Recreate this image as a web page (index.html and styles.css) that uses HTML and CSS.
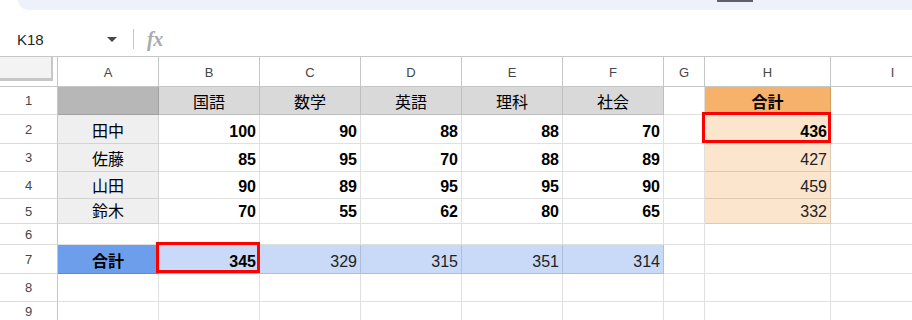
FILE: index.html
```html
<!DOCTYPE html>
<html lang="ja">

<head>
    <meta charset="UTF-8">
    <meta name="viewport" content="width=device-width, initial-scale=1.0">
    <title>成績表 - スプレッドシート</title>
    <link rel="stylesheet" href="styles.css">
</head>

<body>
    <div class="toolbar">
        <span class="toolbar-tab"></span>
    </div>

    <div class="formula-bar">
        <div class="name-box">
            <span class="cell-ref">K18</span>
            <span class="caret"></span>
        </div>
        <span class="divider"></span>
        <span class="fx">fx</span>
    </div>

    <div class="sheet">
        <!-- column headers -->
        <div class="corner"><span class="corner-box"></span></div>
        <div class="ch">A</div>
        <div class="ch">B</div>
        <div class="ch">C</div>
        <div class="ch">D</div>
        <div class="ch">E</div>
        <div class="ch">F</div>
        <div class="ch">G</div>
        <div class="ch">H</div>
        <div class="ch">I</div>

        <!-- row 1 -->
        <div class="rh">1</div>
        <div class="c fill-dark"></div>
        <div class="c ctr fill-gray">国語</div>
        <div class="c ctr fill-gray">数学</div>
        <div class="c ctr fill-gray">英語</div>
        <div class="c ctr fill-gray">理科</div>
        <div class="c ctr fill-gray">社会</div>
        <div class="c"></div>
        <div class="c ctr b fill-orange">合計</div>
        <div class="c"></div>

        <!-- row 2 -->
        <div class="rh">2</div>
        <div class="c ctr fill-light">田中</div>
        <div class="c num b">100</div>
        <div class="c num b">90</div>
        <div class="c num b">88</div>
        <div class="c num b">88</div>
        <div class="c num b">70</div>
        <div class="c"></div>
        <div class="c num b fill-peach hl">436</div>
        <div class="c"></div>

        <!-- row 3 -->
        <div class="rh">3</div>
        <div class="c ctr fill-light">佐藤</div>
        <div class="c num b">85</div>
        <div class="c num b">95</div>
        <div class="c num b">70</div>
        <div class="c num b">88</div>
        <div class="c num b">89</div>
        <div class="c"></div>
        <div class="c num fill-peach">427</div>
        <div class="c"></div>

        <!-- row 4 -->
        <div class="rh">4</div>
        <div class="c ctr fill-light">山田</div>
        <div class="c num b">90</div>
        <div class="c num b">89</div>
        <div class="c num b">95</div>
        <div class="c num b">95</div>
        <div class="c num b">90</div>
        <div class="c"></div>
        <div class="c num fill-peach">459</div>
        <div class="c"></div>

        <!-- row 5 -->
        <div class="rh">5</div>
        <div class="c ctr fill-light">鈴木</div>
        <div class="c num b">70</div>
        <div class="c num b">55</div>
        <div class="c num b">62</div>
        <div class="c num b">80</div>
        <div class="c num b">65</div>
        <div class="c"></div>
        <div class="c num fill-peach">332</div>
        <div class="c"></div>

        <!-- row 6 -->
        <div class="rh">6</div>
        <div class="c"></div>
        <div class="c"></div>
        <div class="c"></div>
        <div class="c"></div>
        <div class="c"></div>
        <div class="c"></div>
        <div class="c"></div>
        <div class="c"></div>
        <div class="c"></div>

        <!-- row 7 -->
        <div class="rh">7</div>
        <div class="c ctr b fill-blue">合計</div>
        <div class="c num b fill-sky hl">345</div>
        <div class="c num fill-sky">329</div>
        <div class="c num fill-sky">315</div>
        <div class="c num fill-sky">351</div>
        <div class="c num fill-sky">314</div>
        <div class="c"></div>
        <div class="c"></div>
        <div class="c"></div>

        <!-- row 8 -->
        <div class="rh">8</div>
        <div class="c"></div>
        <div class="c"></div>
        <div class="c"></div>
        <div class="c"></div>
        <div class="c"></div>
        <div class="c"></div>
        <div class="c"></div>
        <div class="c"></div>
        <div class="c"></div>

        <!-- row 9 -->
        <div class="rh">9</div>
        <div class="c"></div>
        <div class="c"></div>
        <div class="c"></div>
        <div class="c"></div>
        <div class="c"></div>
        <div class="c"></div>
        <div class="c"></div>
        <div class="c"></div>
        <div class="c"></div>
    </div>
</body>

</html>
```

FILE: styles.css
```css
body {
    margin: 0;
    width: 912px;
    height: 320px;
    overflow: hidden;
    background: #fff;
    font-family: 'Liberation Sans', Arial, 'Noto Sans CJK JP', sans-serif;
    color: #000;
}

/* bottom edge of the toolbar pill */
.toolbar {
    height: 10px;
    margin-left: 18px;
    background-color: #edf2fa;
    border-bottom-left-radius: 16px;
    display: flex;
}

.toolbar-tab {
    width: 36px;
    height: 2px;
    margin-left: 699px;
    background-color: #5f6368;
}

.formula-bar {
    height: 47px;
    box-sizing: border-box;
    padding: 19px 0 7px;
    border-bottom: 1px solid #c4c7c5;
    display: flex;
    align-items: center;
}

.name-box {
    width: 118px;
    padding-left: 17px;
    box-sizing: border-box;
    display: flex;
    align-items: center;
    justify-content: space-between;
}

.cell-ref {
    font-size: 15px;
    color: #1f1f1f;
}

.caret {
    width: 0;
    height: 0;
    border-left: 5px solid transparent;
    border-right: 5px solid transparent;
    border-top: 5px solid #444746;
    margin-right: 1px;
}

.divider {
    width: 1px;
    height: 20px;
    margin-left: 15px;
    background-color: #c4c7c5;
}

.fx {
    margin-left: 13px;
    font-family: 'Liberation Serif', serif;
    font-style: italic;
    font-weight: bold;
    font-size: 20px;
    color: #a8abae;
    letter-spacing: -0.5px;
}

.sheet {
    display: grid;
    grid-template-columns: 58px 101px 101px 101px 101px 101px 101px 41px 126px 124px;
    grid-template-rows: 30px 28px 29px 28px 27px 25px 21px 29px 28px 20px;
}

.sheet > div {
    box-sizing: border-box;
}

.corner {
    border-right: 1px solid #c4c7c5;
    border-bottom: 1px solid #c4c7c5;
}

.corner-box {
    display: block;
    width: 53px;
    height: 24px;
    box-sizing: border-box;
    background-color: #f3f3f3;
    border-right: 2px solid #c7c7c7;
    border-bottom: 3px solid #c7c7c7;
}

.ch,
.rh {
    font-size: 13px;
    color: #444746;
    display: flex;
    align-items: center;
    justify-content: center;
    border-right: 1px solid #c4c7c5;
    border-bottom: 1px solid #c4c7c5;
}

.ch {
    padding-top: 1px;
}

.rh {
    border-bottom-color: #d9d9d9;
}

.c {
    font-size: 16px;
    line-height: 18px;
    padding: 0 3px 2px;
    display: flex;
    align-items: flex-end;
    border-right: 1px solid rgba(0, 0, 0, 0.12);
    border-bottom: 1px solid rgba(0, 0, 0, 0.12);
    color: #222;
}

.num {
    justify-content: flex-end;
}

.ctr {
    justify-content: center;
    color: #000;
}

.b {
    font-weight: bold;
    color: #000;
}

.fill-dark {
    background-color: #b7b7b7;
}

.fill-gray {
    background-color: #d9d9d9;
}

.fill-light {
    background-color: #efefef;
}

.fill-orange {
    background-color: #f6b26b;
}

.fill-peach {
    background-color: #fce5cd;
}

.fill-blue {
    background-color: #6d9eeb;
}

.fill-sky {
    background-color: #c9daf8;
}

/* red annotation frame */
.hl {
    position: relative;
    z-index: 1;
}

.hl::after {
    content: "";
    position: absolute;
    left: -3px;
    right: -1px;
    top: -3px;
    bottom: 0;
    border: 3px solid #ff0000;
}
```
